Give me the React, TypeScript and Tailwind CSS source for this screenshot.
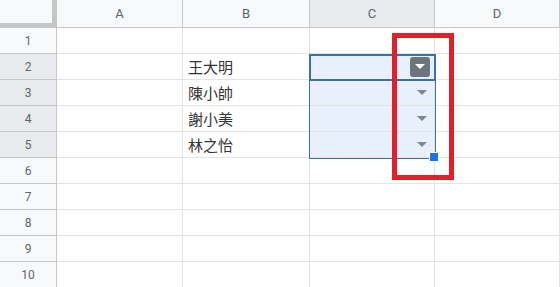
import React from "react";

const cols = ["A", "B", "C", "D"];
const colWidths = ["w-[126px]", "w-[127px]", "w-[125px]", "w-[125px]"];
const names: Record<number, string> = { 2: "王大明", 3: "陳小帥", 4: "謝小美", 5: "林之怡" };

function Caret({ className }: { className?: string }) {
  return (
    <svg width="10" height="5" viewBox="0 0 10 5" className={className}>
      <path d="M0 0h10L5 5z" fill="currentColor" />
    </svg>
  );
}

export default function App() {
  const rows = Array.from({ length: 10 }, (_, i) => i + 1);

  return (
    <div
      className="relative w-[560px] h-[287px] overflow-hidden bg-white text-[#202124]"
      style={{ fontFamily: "Roboto, 'Liberation Sans', 'Noto Sans CJK TC', sans-serif" }}
    >
      {/* header row */}
      <div className="flex h-[28px]">
        <div className="w-[57px] h-[28px] bg-[#f8f9fa] border-r-[5px] border-b-[5px] border-[#c4c7c5]" />
        {cols.map((c, i) => (
          <div
            key={c}
            className={`${colWidths[i]} h-[28px] flex items-center justify-center text-[13px] text-[#5f6368] border-r border-b border-[#c7c7c7] ${
              c === "C" ? "bg-[#e8eaed]" : "bg-[#f8f9fa]"
            }`}
          >
            {c}
          </div>
        ))}
      </div>

      {rows.map((r) => {
        const sel = r >= 2 && r <= 5;
        return (
          <div key={r} className="flex h-[26px]">
            <div
              className={`w-[57px] h-[26px] flex items-center justify-center text-[12px] text-[#5f6368] border-r border-b border-[#c7c7c7] ${
                sel ? "bg-[#e8eaed]" : "bg-[#f8f9fa]"
              }`}
            >
              {r}
            </div>
            {cols.map((c, i) => (
              <div
                key={c}
                className={`${colWidths[i]} h-[26px] flex items-center border-r border-b border-[#e2e3e3] ${
                  c === "C" && sel ? "bg-[#e8f0fe] justify-end pr-[7px]" : ""
                }`}
              >
                {c === "B" && names[r] && (
                  <span
                    className="pl-[5px] text-[15px] leading-none text-[#333]"
                    style={{ fontFamily: "'Noto Sans CJK TC', sans-serif" }}
                  >
                    {names[r]}
                  </span>
                )}
                {c === "C" && sel && r !== 2 && <Caret className="text-[#80868b]" />}
                {c === "C" && r === 2 && (
                  <div className="w-[20px] h-[20px] mr-[-3px] rounded-[3px] bg-[#6f757d] flex items-center justify-center">
                    <Caret className="text-white" />
                  </div>
                )}
              </div>
            ))}
          </div>
        );
      })}

      {/* selection range */}
      <div className="absolute left-[309px] top-[54px] w-[127px] h-[105px] border border-[#3b71a8] pointer-events-none" />
      <div className="absolute left-[309px] top-[54px] w-[127px] h-[27px] border-2 border-[#3b71a8] pointer-events-none" />
      <div className="absolute left-[429px] top-[152px] w-[10px] h-[10px] bg-[#1a73e8] border border-white" />

      {/* annotation */}
      <div className="absolute left-[392px] top-[33px] w-[62px] h-[147px] border-[5px] border-[#e2202a]" />
    </div>
  );
}
